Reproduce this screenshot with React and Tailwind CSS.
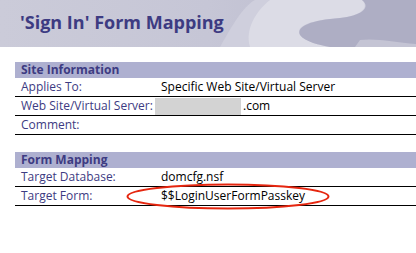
import React from "react"

function Row({ label, children }) {
  return (
    <div className="flex h-[19px] items-center border-b border-black">
      <div className="w-[140px] whitespace-nowrap pl-[6px] text-[#3d3b82]">{label}</div>
      <div className="relative flex flex-1 items-center self-stretch whitespace-nowrap">{children}</div>
    </div>
  )
}

function Section({ title, children }) {
  return (
    <div>
      <div className="flex h-4 items-center bg-[#aeb0d0] pl-[6px] font-bold text-[#3d3b82]">{title}</div>
      {children}
    </div>
  )
}

export default function App() {
  return (
    <div className="h-[253px] w-[416px] overflow-hidden bg-white font-['Open_Sans',sans-serif] text-[12px]">
      {/* Banner */}
      <div className="relative h-[47px] bg-gradient-to-r from-[#cbcbd9] via-[#c6c6d6] to-[#b8b8cc]">
        <svg className="absolute inset-0" width="416" height="47" viewBox="0 0 416 47">
          <path d="M220 47 C235 20 245 5 255 0 L416 0 L416 47 Z" fill="#cfcfdd" />
          <path d="M270 0 L362 0 C370 8 360 16 340 18 C310 20 295 26 300 35 C305 42 320 45 330 47 L250 47 C245 30 255 12 270 0 Z" fill="#dcdce6" />
          <path d="M300 35 C296 26 312 20 340 18 C360 16 372 8 362 0 L416 0 L416 47 L330 47 C320 45 305 42 300 35 Z" fill="#aeaec4" />
          <path d="M360 40 C375 38 395 42 416 44 L416 47 L355 47 Z" fill="#c4c4d4" />
        </svg>
        <h1 className="relative pl-5 pt-[10px] text-[18px] font-bold leading-[24px] text-[#3d3b82]">'Sign In' Form Mapping</h1>
      </div>

      <div className="ml-[15px] mt-[15px]">
        <Section title="Site Information">
          <Row label="Applies To:">
            <span className="pl-[6px] text-black">Specific Web Site/Virtual Server</span>
          </Row>
          <Row label="Web Site/Virtual Server:">
            <div className="h-[17px] w-[86px] self-center bg-[#d3d3d3]" />
            <span className="pl-[2px] text-black">.com</span>
          </Row>
          <Row label="Comment:" />
        </Section>

        <div className="h-[17px]" />

        <Section title="Form Mapping">
          <Row label="Target Database:">
            <span className="pl-[6px] text-black">domcfg.nsf</span>
          </Row>
          <Row label="Target Form:">
            <svg className="pointer-events-none absolute left-[-29px] top-[-4px]" width="204" height="27" viewBox="0 0 204 27">
              <ellipse cx="102" cy="13.5" rx="100.5" ry="12" fill="none" stroke="#e5260f" strokeWidth="2" />
            </svg>
            <span className="relative pl-[6px] text-black">$$LoginUserFormPasskey</span>
          </Row>
        </Section>
      </div>
    </div>
  )
}
